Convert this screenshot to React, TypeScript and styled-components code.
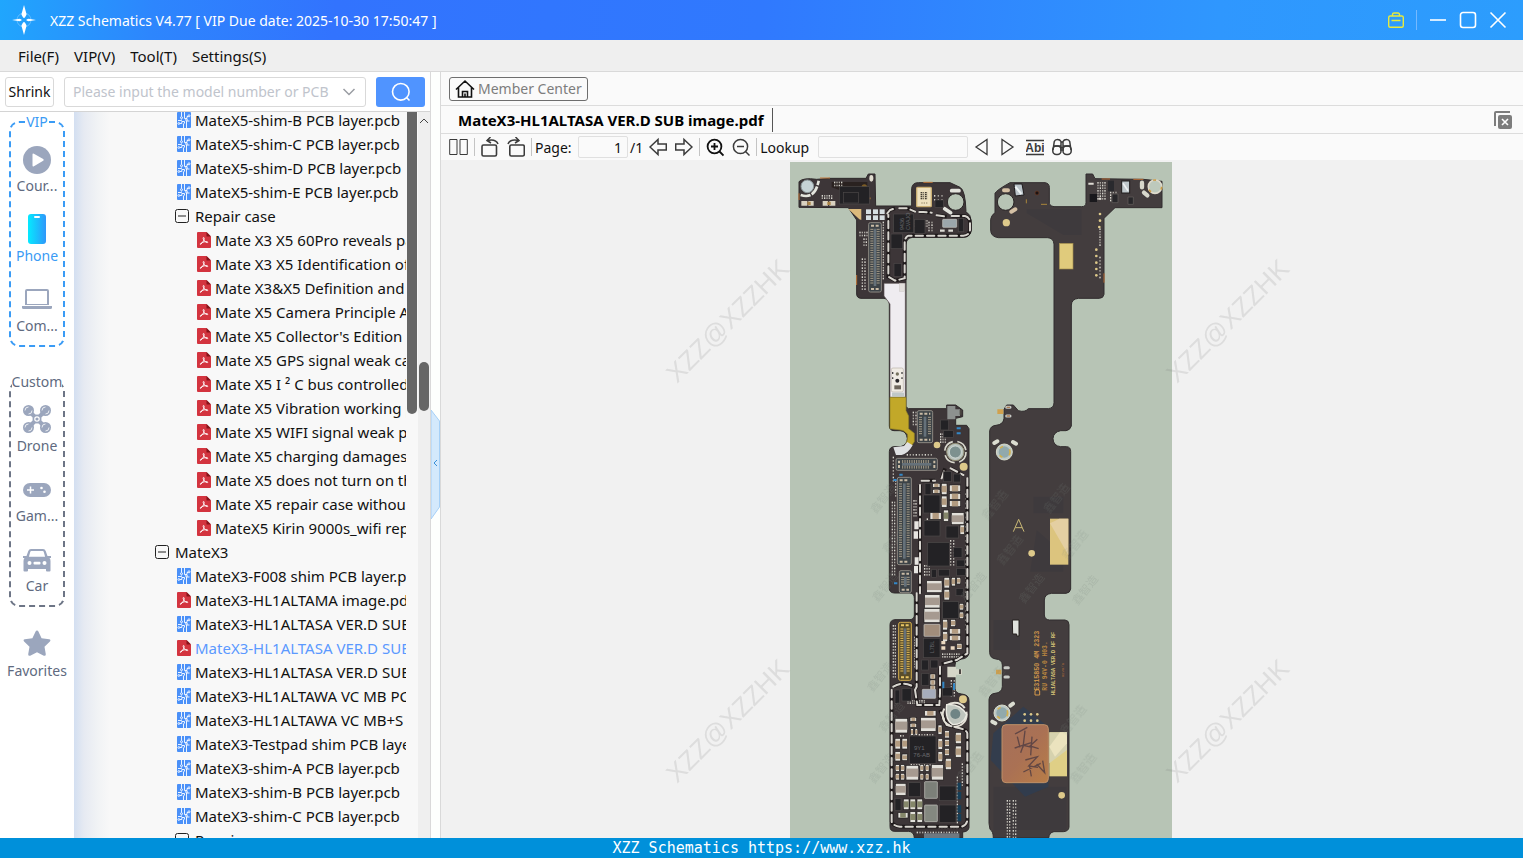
import React, { useState } from "react";
import styled, { createGlobalStyle } from "styled-components";

const font = `"Noto Sans", "Open Sans", "Noto Sans CJK SC", sans-serif`;

const GlobalStyle = createGlobalStyle`
  * { box-sizing: border-box; }
  body { margin: 0; font-family: ${font}; font-size: 14px; color: #111; }
  button, input { font: inherit; color: inherit; }
  button { border: 0; padding: 0; background: none; cursor: pointer; }
  svg { display: block; flex: none; }
`;

const Window = styled.div`
  display: flex;
  flex-direction: column;
  height: 100vh;
  min-height: 480px;
  overflow: hidden;
  background: #fff;
`;

/* ---------- title bar and menu ---------- */

const TitleBar = styled.header`
  display: flex;
  align-items: center;
  flex: none;
  height: 40px;
  padding: 0 16px 0 12px;
  color: #fff;
  background: linear-gradient(95deg, #20a6fd 0%, #2d86fd 10%, #3273fe 22%, #3079fe 50%, #2f97fe 80%, #2c9dfd 100%);
`;
const Title = styled.h1`
  flex: 1;
  margin: 0 0 0 14px;
  font-size: 14px;
  font-weight: 400;
`;
const WindowButtons = styled.div`
  display: flex;
  align-items: center;
  gap: 12px;
`;
const TitleDivider = styled.span`
  width: 1px;
  height: 20px;
  background: #75b9ff;
`;
const MenuBar = styled.nav`
  display: flex;
  align-items: center;
  flex: none;
  gap: 15px;
  height: 32px;
  padding: 1px 18px 0;
  font-size: 15px;
  background: #efefef;
  border-bottom: 1px solid #d9d9d9;
`;

const Main = styled.div`
  display: flex;
  flex: 1;
  min-height: 0;
`;

/* ---------- left side ---------- */

const LeftPane = styled.aside`
  display: flex;
  flex-direction: column;
  flex: none;
  width: 431px;
  border-right: 1px solid #d9d9d9;
`;
const SearchRow = styled.form`
  display: flex;
  align-items: center;
  flex: none;
  height: 40px;
  padding: 0 5px;
  border-bottom: 1px solid #d4d4d4;
`;
const ShrinkButton = styled.button`
  width: 49px;
  height: 30px;
  border: 1px solid #d9d9d9;
  border-radius: 3px;
`;
const Combo = styled.div`
  display: flex;
  align-items: center;
  flex: 1;
  height: 30px;
  margin: 0 10px;
  padding: 0 8px;
  gap: 6px;
  border: 1px solid #d9d9d9;
  border-radius: 3px;
`;
const ComboInput = styled.input`
  flex: 1;
  min-width: 0;
  border: 0;
  padding: 0;
  outline: 0;
  background: none;
  &::placeholder { color: #c0c4cc; opacity: 1; }
`;
const SearchButton = styled.button`
  display: grid;
  place-items: center;
  width: 49px;
  height: 30px;
  border-radius: 3px;
  background: #5094ff;
`;
const LeftBody = styled.div`
  display: flex;
  flex: 1;
  min-height: 0;
`;
const Categories = styled.nav`
  display: flex;
  flex-direction: column;
  align-items: center;
  flex: none;
  width: 74px;
`;
const CategoryGroup = styled.fieldset<{ $active?: boolean }>`
  width: 56px;
  min-width: 0;
  margin: 0;
  padding: 0 0 3px;
  border: 2px dashed ${(p) => (p.$active ? "#3a9bf5" : "#6d7586")};
  border-radius: 10px;
  & + & { margin: 25px 0 10px; }
`;
const GroupTitle = styled.legend<{ $active?: boolean }>`
  margin: 0 auto;
  padding: 0;
  line-height: 20px;
  color: ${(p) => (p.$active ? "#3a9bf5" : "#606a80")};
`;
const CategoryButton = styled.button<{ $active?: boolean }>`
  display: flex;
  flex-direction: column;
  align-items: center;
  justify-content: flex-end;
  width: 100%;
  height: 66px;
  margin-bottom: 4px;
  color: ${(p) => (p.$active ? "#3a9bf5" : "#606a80")};
`;
const CategoryLabel = styled.span`
  line-height: 24px;
`;
const TreeList = styled.ul`
  flex: 1;
  min-width: 0;
  margin: 0;
  padding: 0;
  overflow: hidden;
  list-style: none;
  font-size: 15px;
  background: linear-gradient(90deg, #d3dff1 0, #e6eaf2 10px, #f1f3f5 24px, #f8f8f8 36px);
`;
const TreeRow = styled.li`
  height: 24px;
  overflow: hidden;
  &:first-child { margin-top: -4px; }
`;
const TreeItem = styled.button<{ $depth: number; $active?: boolean }>`
  display: flex;
  align-items: center;
  height: 24px;
  padding-left: ${(p) => 81 + p.$depth * 20}px;
  white-space: nowrap;
  color: ${(p) => (p.$active ? "#5b99ff" : "#111")};
`;
const IconSlot = styled.span<{ $file?: boolean }>`
  flex: none;
  width: 20px;
  padding-left: ${(p) => (p.$file ? 2 : 0)}px;
`;
const InnerScroll = styled.div`
  flex: none;
  width: 12px;
  padding-left: 1px;
  background: #f8f8f8;
`;
const InnerThumb = styled.div`
  width: 10px;
  height: 302px;
  border-radius: 0 0 5px 5px;
  background: #666;
`;
const OuterScroll = styled.div`
  display: flex;
  flex-direction: column;
  align-items: center;
  flex: none;
  width: 12px;
  padding-top: 6px;
  background: #efefef;
`;
const OuterThumb = styled.div`
  width: 10px;
  height: 49px;
  margin-top: 238px;
  border-radius: 5px;
  background: #666;
`;
const Splitter = styled.div`
  display: flex;
  align-items: center;
  flex: none;
  width: 9px;
  padding-top: 20px;
  background: #fdfffd;
`;

/* ---------- right side ---------- */

const RightPane = styled.main`
  display: flex;
  flex-direction: column;
  flex: 1;
  min-width: 0;
  border-left: 1px solid #d9d9d9;
  background: #fafafa;
`;
const MemberRow = styled.div`
  display: flex;
  align-items: center;
  flex: none;
  height: 34px;
  padding: 0 8px;
  border-bottom: 1px solid #dcdcdc;
`;
const MemberButton = styled.button`
  display: flex;
  align-items: center;
  gap: 3px;
  height: 24px;
  padding: 0 5px;
  border: 1px solid #6e6e6e;
  border-radius: 3px;
  color: #7d7d7d;
`;
const TabRow = styled.div`
  display: flex;
  align-items: center;
  justify-content: space-between;
  flex: none;
  height: 28px;
  padding: 0 10px 0 17px;
  border-bottom: 1px solid #dcdcdc;
`;
const Tab = styled.button`
  height: 24px;
  padding-right: 8px;
  border-right: 1px solid #555;
  font-size: 15px;
  font-weight: 700;
  color: #000;
`;
const Toolbar = styled.div`
  display: flex;
  align-items: center;
  flex: none;
  gap: 6px;
  height: 26px;
  padding: 0 8px;
`;
const ToolGroup = styled.div`
  display: flex;
  align-items: center;
  gap: 8px;
`;
const ToolLabel = styled.label<{ $width: number }>`
  width: ${(p) => p.$width}px;
  margin-left: -3px;
  white-space: nowrap;
`;
const ToolSep = styled.span`
  width: 1px;
  height: 18px;
  background: #c4c4c4;
`;
const ToolInput = styled.input<{ $width: number }>`
  width: ${(p) => p.$width}px;
  height: 22px;
  padding: 0 5px;
  text-align: right;
  border: 1px solid #e0e0e0;
  border-radius: 2px;
  background: #fafafa;
`;
const PageField = styled.span`
  display: flex;
  align-items: center;
  gap: 2px;
`;
const Viewer = styled.section`
  position: relative;
  display: flex;
  justify-content: center;
  align-items: flex-start;
  flex: 1;
  min-height: 0;
  padding: 2px 2px 0 0;
  overflow: hidden;
  background: #f1f1f1;
`;
const Watermarks = styled.svg`
  position: absolute;
  inset: 0;
  width: 100%;
  height: 100%;
  pointer-events: none;
`;
const Footer = styled.footer`
  flex: none;
  height: 20px;
  line-height: 20px;
  text-align: center;
  font-family: "DejaVu Sans Mono", "Liberation Mono", monospace;
  font-size: 15px;
  color: #fff;
  background: #0090da;
`;

/* ---------- small icons ---------- */

const Logo = () => (
  <svg width="24" height="30" viewBox="0 0 24 30" fill="#fff">
    <circle cx="12" cy="15" r="7" fill="none" stroke="#8fd0ff" strokeWidth="0.8" opacity="0.7" />
    <path d="M12 0l2.600 9.500-1.800 3.200h-1.600L9.400 9.500zM12 30l2.600-9.500-1.800-3.200h-1.600l-1.800 3.200zM0 15l7.500-1.300 2 .9v.8l-2 .9zM24 15l-7.500-1.300-2 .9v.8l2 .9z" />
  </svg>
);
const Bag = () => (
  <svg width="16" height="18" viewBox="1 0 16 18" fill="none" stroke="#e8ea3c" strokeWidth="1.400">
    <rect x="1.700" y="5" width="14.600" height="11.300" rx="1.500" />
    <path d="M5.500 5V3.500a1.500 1.500 0 0 1 1.500-1.500h4a1.500 1.500 0 0 1 1.500 1.500V5M4.500 9.500h9" />
  </svg>
);
const WinIcon = ({ d }: { d: string }) => (
  <svg width="18" height="18" viewBox="0 0 18 18" fill="none" stroke="#fff" strokeWidth="1.600"><path d={d} /></svg>
);
const PcbFile = () => (
  <svg width="14" height="16" viewBox="0 0 14 16">
    <rect width="14" height="16" rx="1" fill="#4a90f8" />
    <g fill="none" stroke="#fff" strokeWidth="0.900">
      <path d="M4.500 0v4.500M7.500 0v6.500h2.500V4.500h1.200M1 8.500h3.500v-1M2.800 11.500h2v-2h2.700V11L6.500 12v4M9.500 16V9h3" />
      <circle cx="4.500" cy="5.700" r="1" /><circle cx="12" cy="3.800" r="1" /><circle cx="1.800" cy="11.500" r="0.900" /><circle cx="9.500" cy="7.900" r="0.900" />
    </g>
  </svg>
);
const PdfFile = () => (
  <svg width="14" height="16" viewBox="0 0 14 16">
    <path d="M1 0h8.500L14 4.500V15a1 1 0 0 1-1 1H1a1 1 0 0 1-1-1V1a1 1 0 0 1 1-1z" fill="#d3343f" />
    <path d="M9.500 0L14 4.500H9.500z" fill="#85141b" />
    <path d="M6.600 5.500c1.400 0 .5 3.800-2.800 6.800-.6.300-1-.3-.3-.8 2.200-1.500 5-2.300 7-1.700.7.400.2 1-.5.800-2-.5-3.700-3-3.900-4.400 0-.4.200-.7.500-.7z" fill="none" stroke="#fff" strokeWidth="0.900" />
  </svg>
);
const Minus = () => (
  <svg width="14" height="14" viewBox="0 0 14 14" fill="none" stroke="#222"><rect x="0.500" y="0.500" width="13" height="13" rx="2" /><path d="M3 7h8" /></svg>
);

const catColor = "#9ba6bd";
const CourseIcon = () => (
  <svg width="28" height="28" viewBox="0 0 28 28"><circle cx="14" cy="14" r="14" fill={catColor} /><path d="M9.500 8.500q0-1.500 1.400-.8l9.300 5.400q1.200.9 0 1.700l-9.300 5.400q-1.400.6-1.400-.8z" fill="#fff" /></svg>
);
const PhoneIcon = () => (
  <svg width="18" height="30" viewBox="0 0 18 30">
    <defs><linearGradient id="ph" x1="0" x2="1"><stop offset="0" stopColor="#05eaff" /><stop offset="1" stopColor="#2f97fa" /></linearGradient></defs>
    <rect width="18" height="30" rx="3" fill="url(#ph)" /><rect x="6" y="2" width="6" height="2" rx="1" fill="#fff" />
  </svg>
);
const LaptopIcon = () => (
  <svg width="30" height="28" viewBox="0 0 30 28" fill={catColor}><path d="M5 3h20a2 2 0 0 1 2 2v14H3V5a2 2 0 0 1 2-2zm0 2v13h20V5z" fillRule="evenodd" /><path d="M0 20h30v1.500q0 1.500-1.500 1.500h-27Q0 23 0 21.500z" /></svg>
);
const DroneIcon = () => (
  <svg width="28" height="30" viewBox="0 0 28 30">
    <path d="M6 7l16 16M22 7L6 23" stroke={catColor} strokeWidth="4" />
    {[[5.5, 6.5], [22.5, 6.5], [5.5, 23.500], [22.5, 23.500]].map(([x, y]) => (
      <g key={`${x}-${y}`}><circle cx={x} cy={y} r="5.500" fill={catColor} /><path d={`M${x - 3.500} ${y}a3.500 3.500 0 0 1 3.500-3.500M${x + 3.500} ${y}a3.500 3.500 0 0 1-3.500 3.500`} fill="none" stroke="#fff" strokeWidth="0.800" /></g>
    ))}
    <circle cx="14" cy="15" r="4.500" fill={catColor} /><circle cx="14" cy="15" r="2.200" fill="none" stroke="#fff" strokeWidth="1.200" />
  </svg>
);
const GameIcon = () => (
  <svg width="28" height="28" viewBox="0 0 28 28"><rect y="7" width="28" height="14" rx="7" fill={catColor} /><path d="M7.500 10.500v7M4 14h7" stroke="#fff" strokeWidth="1.500" /><circle cx="18.500" cy="12" r="1.300" fill="#fff" /><circle cx="21.500" cy="15.700" r="1.300" fill="#fff" /></svg>
);
const CarIcon = () => (
  <svg width="28" height="28" viewBox="0 0 28 28">
    <path d="M8 3h12q2 0 2.700 2l1.800 5H28v2h-1.500q1 1 1 3v9.500q0 1-1 1h-2.500q-1 0-1-1V23H5v1.500q0 1-1 1H1.500q-1 0-1-1V15q0-2 1-3H0v-2h3.500l1.800-5Q6 3 8 3z" fill={catColor} />
    <path d="M8.300 5h11.400q.8 0 1 .8l1.400 5H5.900l1.400-5q.3-.8 1-.8z" fill="#fff" />
    <circle cx="6.500" cy="17" r="2" fill="#fff" /><circle cx="21.500" cy="17" r="2" fill="#fff" /><rect x="10.500" y="15.700" width="7" height="2.800" rx="1" fill="#fff" />
  </svg>
);
const StarIcon = () => (
  <svg width="30" height="30" viewBox="0 0 30 30"><path d="M15 1.500q1 0 1.400 1l3.200 6.700 7.600 1q2 .6.700 2.300l-5.400 5.200 1.300 7.500q0 2.200-2 1.500L15 23.200l-6.800 3.500q-2 .7-2-1.500l1.300-7.500-5.400-5.200q-1.300-1.700.7-2.300l7.600-1 3.200-6.700q.4-1 1.400-1z" fill={catColor} /></svg>
);

const Tool = ({ label, width = 18, children }: { label: string; width?: number; children: React.ReactNode }) => (
  <button type="button" aria-label={label} title={label}>
    <svg width={width} height="20" viewBox={`0 0 ${width} 20`} fill="none" stroke="#3b3b3b" strokeWidth="1.300">{children}</svg>
  </button>
);

/* ---------- circuit board page: three drawing units to a pixel ---------- */

type Part = [number, number, number, number];

const whiteFence =
  "M322 160L330 150L345 145M358 145H382L405 155M418 156H430L455 158M470 166L500 170M515 168H555Q570 172 570 190V210Q568 226 550 227H385Q374 232 374 250V355L345 362L325 350V165" +
  "M485 955L495 925M425 962H465M512 925L550 945M420 975V1300M562 955V1480L530 1500L485 1512M410 1300V1580L405 1590M480 1520V1600L478 1635H412L405 1590M340 1580Q370 1562 400 1580" +
  "M335 1590V1985Q340 1998 360 2000H545Q560 1996 562 1980V1720Q560 1710 540 1705L500 1695L480 1650";

const darkChips: Part[] = [
  [341, 162, 60, 56], [403, 178, 32, 42], [333, 222, 35, 44], [342, 310, 22, 40], [178, 80, 90, 52], [190, 97, 45, 32], [465, 120, 25, 22], [535, 175, 16, 40],
  [482, 780, 24, 30], [490, 812, 30, 20], [490, 935, 24, 30], [520, 942, 22, 24], [435, 970, 18, 34], [430, 1005, 50, 54], [432, 1082, 48, 46], [498, 1098, 38, 36], [443, 1148, 65, 70],
  [520, 1162, 26, 30], [530, 1200, 24, 20], [530, 1225, 26, 22], [475, 1228, 34, 20], [455, 1228, 14, 24], [528, 1285, 22, 22], [488, 1325, 48, 50], [430, 1435, 50, 58], [425, 1500, 20, 30], [452, 1500, 22, 24], [425, 1540, 22, 36],
  [366, 1585, 28, 38], [345, 1590, 14, 40], [488, 1582, 30, 26], [388, 1728, 80, 82], [386, 1868, 35, 42], [478, 1878, 50, 44], [478, 1935, 50, 52], [345, 1915, 18, 36],
];
const caps: Part[] = [
  [458, 970, 22, 12], [458, 988, 22, 12], [484, 970, 17, 34], [508, 975, 34, 20], [508, 1000, 34, 18], [508, 1022, 34, 18], [484, 1008, 17, 34], [450, 1058, 34, 20], [514, 1058, 38, 36], [540, 1095, 13, 28],
  [440, 1262, 46, 36], [434, 1304, 46, 40], [434, 1345, 46, 36], [432, 1346, 48, 42], [492, 1252, 17, 32], [492, 1288, 17, 32], [514, 1252, 12, 26], [530, 1252, 12, 20], [538, 1330, 13, 20], [538, 1356, 13, 20],
  [488, 1378, 15, 32], [512, 1378, 15, 22], [508, 1406, 34, 16], [508, 1426, 34, 16], [488, 1415, 15, 30], [530, 1450, 16, 18], [450, 1542, 17, 15], [450, 1560, 17, 15], [450, 1576, 17, 12],
  [345, 1675, 38, 44], [422, 1672, 46, 42], [390, 1672, 20, 12], [390, 1690, 20, 12], [392, 1706, 8, 20], [405, 1706, 8, 20], [434, 1652, 34, 16], [345, 1735, 16, 32], [366, 1735, 16, 32], [345, 1775, 16, 28], [366, 1782, 16, 20],
  [474, 1695, 12, 28], [474, 1736, 14, 32], [474, 1775, 14, 30], [494, 1712, 14, 22], [494, 1738, 14, 22], [494, 1765, 14, 22], [526, 1717, 18, 34], [526, 1758, 18, 34], [496, 1795, 18, 34],
  [378, 1816, 38, 44], [454, 1814, 36, 46], [346, 1814, 12, 20], [362, 1814, 12, 20], [420, 1814, 11, 20], [436, 1814, 11, 20], [346, 1840, 12, 20], [362, 1840, 12, 20], [420, 1840, 11, 20], [436, 1840, 11, 20], [346, 1870, 32, 36],
];
const oliveCaps: Part[] = [
  [370, 1917, 17, 32], [390, 1917, 17, 32], [411, 1917, 17, 32], [390, 1955, 17, 32], [411, 1955, 17, 32], [354, 1958, 30, 16], [490, 1050, 16, 34],
];
const shields: [number, number, number, number, string][] = [
  [488, 178, 42, 24, "#9ba6ab"], [432, 1393, 48, 36, "#a18d7b"], [427, 1588, 40, 27, "#a6acbb"], [434, 1865, 38, 50, "#7c8079"], [434, 1935, 38, 50, "#848880"],
];
/* [x, y, columns, rows, x step, y step] of rows of solder pads */
const padGrids: [number, number, number, number, number, number][] = [
  [238, 215, 4, 2, 7, 9], [250, 235, 2, 3, 7, 9], [245, 295, 2, 11, 8, 9], [308, 185, 1, 22, 6, 8], [335, 1025, 2, 25, 7, 9], [400, 1020, 2, 6, 6, 9], [398, 755, 2, 5, 8, 9], [338, 890, 1, 8, 7, 10],
  [345, 960, 1, 6, 7, 9], [380, 882, 9, 1, 9, 8], [404, 180, 6, 3, 7, 8], [445, 185, 2, 4, 9, 8], [462, 105, 3, 2, 11, 12], [162, 65, 4, 2, 7, 9], [125, 105, 5, 2, 7, 7], [338, 1395, 2, 18, 6, 9],
  [402, 1430, 1, 12, 6, 8], [530, 1850, 1, 16, 6, 9], [545, 1810, 1, 8, 6, 9], [440, 1075, 1, 4, 7, 9], [486, 1480, 8, 2, 7, 8], [510, 1140, 2, 9, 9, 9], [432, 1215, 3, 4, 7, 9], [480, 820, 3, 4, 7, 8], [475, 2000, 8, 1, 9, 8],
  [392, 1722, 9, 1, 8, 6], [392, 1812, 9, 1, 8, 6], [416, 1135, 1, 14, 7, 9], [555, 1000, 1, 30, 7, 14], [410, 2015, 16, 1, 8, 8], [512, 1560, 2, 6, 9, 9], [382, 1620, 8, 2, 7, 7], [360, 1725, 2, 1, 8, 8],
  [952, 66, 4, 7, 7, 8], [990, 95, 3, 4, 8, 8], [680, 1920, 2, 13, 7, 9], [698, 1920, 2, 13, 7, 10], [958, 205, 1, 7, 8, 8], [958, 290, 1, 7, 8, 10],
];
const goldDots: [number, number, number][] = [
  [679, 188, 11], [960, 162, 4], [960, 182, 4], [958, 201, 4], [949, 269, 4], [949, 288, 4], [949, 308, 4], [949, 327, 4], [949, 346, 4], [471, 855, 10], [551, 920, 12], [755, 1180, 10], [549, 1618, 12], [845, 1906, 10],
  [734, 1663, 4], [753, 1663, 4], [772, 1663, 4], [734, 1682, 4], [753, 1682, 4], [772, 1682, 4],
];
const stamps = [
  [310, 1015], [645, 1035], [830, 1015], [345, 1135], [690, 1170], [885, 1155], [315, 1280], [580, 1280], [755, 1285], [915, 1290],
  [300, 1550], [635, 1565], [335, 1670], [880, 1680], [305, 1825], [570, 1820], [910, 1825],
];

const Connector = ({ x, y, w, h, gold }: { x: number; y: number; w: number; h: number; gold?: boolean }) => {
  const tall = h > w;
  const long = tall ? h : w;
  return (
    <g transform={tall ? `translate(${x} ${y})` : `translate(${x} ${y + h}) rotate(-90)`}>
      <g transform={tall ? undefined : `translate(${h} 0) rotate(0) translate(${-h} 0)`}>
        <rect width={tall ? w : h} height={long} rx="5" fill={gold ? "#594d2a" : "#3d4347"} stroke={gold ? "#d2ac4e" : "#8d8982"} strokeWidth="3" />
        <rect x={(tall ? w : h) / 2 - 4} y="18" width="8" height={long - 36} fill="#65717a" />
        {Array.from({ length: Math.floor((long - 36) / 7) }, (_, i) => (
          <path key={i} d={`M5 ${20 + i * 7}h9M${(tall ? w : h) - 14} ${20 + i * 7}h9`} stroke={gold ? "#e5be5c" : "#a59c88"} strokeWidth="3" />
        ))}
        <path d={`M7 9h${(tall ? w : h) - 14}M7 ${long - 9}h${(tall ? w : h) - 14}`} stroke={gold ? "#e9c665" : "#c9bba5"} strokeWidth="6" strokeDasharray="9 5" />
      </g>
    </g>
  );
};

const Screw = ({ x, y, r = 22 }: { x: number; y: number; r?: number }) => (
  <g>
    <circle cx={x} cy={y} r={r + 6} fill="none" stroke="#d9d8cd" strokeWidth="5" strokeDasharray="38 14" />
    <circle cx={x} cy={y} r={r} fill="#b9c3bd" stroke="#8e8a70" strokeWidth="3" />
    <circle cx={x} cy={y} r={r - 8} fill="#7d918f" stroke="#e3e9e6" strokeWidth="2" />
  </g>
);

const BoardPage = () => (
  <svg width="382" height="676" viewBox="30 6 1146 2028" role="img" aria-label="Front and back of the board">
    <defs>
      <pattern id="mesh" width="6" height="6" patternUnits="userSpaceOnUse"><path d="M0 6L6 0M0 0L6 6" stroke="#2c2f36" strokeWidth="1" /></pattern>
      <linearGradient id="copper" x2="1" y2="1"><stop stopColor="#a5705a" /><stop offset="0.500" stopColor="#aa7154" /><stop offset="1" stopColor="#b87d47" /></linearGradient>
    </defs>
    <rect x="30" y="6" width="1146" height="2028" fill="#b7c4b5" />

    {/* front side */}
    <path
      d="M57 142V65Q70 52 110 58L150 55H258L265 42H285L287 138H395V85Q397 68 415 68H510L540 82Q556 90 558 155Q573 165 573 180V212Q570 232 550 232H398Q378 234 378 255V740L385 746H500V735H527L548 750V770L527 775V796H560L567 806V1480Q563 1496 545 1497Q526 1498 525 1515V1585Q526 1601 545 1602Q567 1604 567 1622V2003Q565 2015 548 2016V2034H403Q402 2014 385 2014H345Q330 2014 330 2000V1395Q330 1380 345 1379H390Q403 1378 403 1365V1315Q403 1300 390 1299H343Q328 1298 328 1285V875Q328 861 342 860H362Q382 854 382 836Q380 813 360 812H342Q328 811 328 798V432Q326 417 312 415H243Q230 414 230 402V180L205 143Z"
      fill="#3d3638" stroke="#2e292b" strokeWidth="3"
    />
    <path d="M120 54h30M430 67h28M230 345v30M57 100v20" stroke="#c0763a" strokeWidth="3" />
    <circle cx="527" cy="126" r="25" fill="#b7c4b5" stroke="#292425" strokeWidth="3" />
    <path d="M515 92h22M494 146l18 12" stroke="#e2e3dc" strokeWidth="11" strokeLinecap="round" />
    <path d="M62 105Q105 120 116 62" fill="none" stroke="#e4e5dd" strokeWidth="8" strokeDasharray="30 4" />
    <circle cx="82" cy="79" r="19" fill="#c6d3d6" stroke="#8b9698" strokeWidth="3" />
    <path d="M64 130h18M85 130h16M128 130h16M148 130h18" stroke="#d9d2c0" strokeWidth="14" />
    <path d="M82 130h10M142 130h10" stroke="#aa8447" strokeWidth="10" />
    <path d="M155 66H262V130H178V90L155 82Z" fill="#2a2220" />
    <path d="M262 100v28M248 115h24" stroke="#9b6d34" strokeWidth="5" />
    <circle cx="253" cy="81" r="8" fill="#7d5d26" />
    <ellipse cx="274" cy="55" rx="6" ry="10" fill="#e0dcd0" />
    <rect x="410" y="82" width="44" height="58" rx="3" fill="#eee1bf" stroke="#c8ad72" strokeWidth="4" />
    <path d="M421 96h22v22h-22z" fill="#d8ccae" /><path d="M422 98h20M422 104h20M422 110h20M422 116h20" stroke="#413b31" strokeWidth="4" strokeDasharray="5 3 2 3" />
    <path d="M424 129h18" stroke="#8c7f63" strokeWidth="3" strokeDasharray="4 3" />
    <path d="M205 147H244V180L238 178Z" fill="#dcba7c" />
    {[258, 279, 299].map((x) => [148, 166].map((y) => <rect key={`${x}${y}`} x={x} y={y} width="15" height="14" fill="#d7dfe2" />))}
    {padGrids.map(([x, y, cols, rows, dx, dy]) =>
      Array.from({ length: cols * rows }, (_, i) => (
        <rect key={`${x}-${y}-${i}`} x={x + (i % cols) * dx} y={y + Math.floor(i / cols) * dy} width="4" height="5" fill={i % 3 ? "#a9a6a0" : "#d9d7cf"} />
      )),
    )}
    <path d={whiteFence} fill="none" stroke="#1f1a1b" strokeWidth="11" />
    <path d={whiteFence} fill="none" stroke="#d8d5cf" strokeWidth="6" strokeDasharray="22 12" strokeLinecap="round" />

    <Connector x={266} y={188} w={38} h={208} />
    <Connector x={352} y={952} w={42} h={262} />
    <Connector x={348} y={895} w={124} h={36} />
    <Connector x={412} y={752} w={46} h={96} />
    <Connector x={358} y={1232} w={36} h={66} />
    <Connector x={356} y={1387} w={38} h={174} gold />

    {/* flex cable */}
    <path d="M312 370H376V712H330V432L312 408Z" fill="#efecf0" stroke="#5a5052" strokeWidth="2" />
    <rect x="358" y="370" width="16" height="24" fill="#e2dfdc" stroke="#bdb7b5" />
    <rect x="334" y="624" width="36" height="72" rx="5" fill="#f0ece4" stroke="#b9b2a7" strokeWidth="2" />
    <circle cx="352" cy="662" r="6" fill="#29282a" /><circle cx="352" cy="642" r="5" fill="#77745f" />
    <path d="M338 636v6M366 636v6M338 652v5M366 652v5" stroke="#444" strokeWidth="4" />
    <rect x="343" y="676" width="20" height="12" fill="#6e675c" /><rect x="336" y="698" width="36" height="12" fill="#c0c8c8" />
    <path d="M330 712H378V752L386 768V806L403 820V845L388 866L376 856Q386 835 382 822Q370 808 355 809L330 806Z" fill="#c2a829" stroke="#8e8024" strokeWidth="2" />
    <path d="M340 862L372 858L382 846L398 856Q385 880 365 885H348Z" fill="#dfe0e2" />

    {darkChips.map(([x, y, w, h]) => <rect key={`${x}-${y}`} x={x} y={y} width={w} height={h} fill="#232225" stroke="#4d4948" strokeWidth="2" />)}
    {[...caps, ...oliveCaps].map(([x, y, w, h], i) => {
      const big = w > 30 && h > 30;
      const body = i >= caps.length ? "#85876a" : big ? "#a69a90" : "#b29b80";
      return (
        <g key={`${x}-${y}`}>
          <rect x={x} y={y} width={w} height={h} fill="#e2e0da" stroke="#211e1e" strokeWidth="2" />
          {w > h && !big ? <rect x={x + w * 0.22} y={y + 1} width={w * 0.56} height={h - 2} fill={body} /> : <rect x={x + 1} y={y + h * 0.22} width={w - 2} height={h * 0.56} fill={body} />}
        </g>
      );
    })}
    {shields.map(([x, y, w, h, c]) => <rect key={y} x={x} y={y} width={w} height={h} rx="2" fill={c} stroke="#c8c8c2" strokeWidth="2" />)}
    <path d="M480 212h14M505 212h14" stroke="#dcdad4" strokeWidth="7" />
    <path d="M403 1084h13v24h-13zM401 1114h13v22h-13zM404 1192h12v22h-12zM402 1218h12v22h-12z" fill="#e7e5e1" />
    <path d="M538 1868v22M538 1896v22M538 1936v22M538 1962v22" stroke="#163e57" strokeWidth="11" />
    <path d="M530 805h12M530 820h12M340 960h10M358 944h10M342 1270h10M490 1565v20M522 1570v20" stroke="#3388c7" strokeWidth="6" />
    <path d="M484 1464h12M512 1464h12M484 1448h12" stroke="#ead8c0" strokeWidth="10" />
    <path d="M502 738H526V748H540V768H526V778H502Z" fill="#8d918f" /><path d="M502 1520H528V1528H546V1544H528V1552H502Z" fill="#d6d6c8" />
    <path d="M542 750v14M540 1528v14" stroke="#4c4743" strokeWidth="6" />
    <Screw x={526} y={876} r={26} />
    <circle cx="524" cy="1664" r="36" fill="none" stroke="#e5e2d8" strokeWidth="6" strokeDasharray="60 12" />
    <path d="M500 1634Q540 1630 560 1664Q550 1694 518 1694Q494 1680 500 1634Z" fill="#bfc5be" stroke="#ecebe3" strokeWidth="4" />
    <circle cx="526" cy="1662" r="15" fill="#6f8485" />
    <rect x="432" y="2020" width="106" height="14" fill="#6f7880" />
    <g fill="#6a6a6e" fontFamily="Liberation Sans" fontSize="18"><text x="402" y="1770">9Y1</text><text x="400" y="1792">76-AB</text></g>
    <g fill="#65676c" fontFamily="Liberation Sans" fontSize="16"><text transform="translate(372 210) rotate(-90)">9436</text><text transform="translate(390 210) rotate(-90)">CVAJO</text><text transform="translate(462 1480) rotate(-90)">L7BL</text></g>

    {/* back side */}
    <path
      d="M632 178Q634 165 645 158V100Q650 90 690 68H795Q808 70 808 82V130Q810 140 822 140H905Q918 140 918 128V42H938L945 56L1090 58L1146 64V143H1005L972 175V403Q970 415 958 415H895Q875 417 874 435V798Q870 811 858 812H842Q820 816 819 836Q820 858 842 860H860Q872 861 872 874V1287Q870 1299 858 1300H815Q794 1302 793 1320V1365Q794 1379 808 1380H855Q867 1381 867 1394V2001Q866 2014 850 2015H822Q808 2017 806 2034H640Q640 2014 630 2008L627 1990V1618Q630 1601 645 1600Q666 1598 667 1580V1515Q666 1498 648 1497Q630 1495 629 1478V812Q632 797 648 796Q670 794 672 775V748L680 735H700L715 752Q735 758 745 746H805Q822 744 822 728V252Q820 233 802 233H655Q632 230 632 210Z"
      fill="#433d3e" stroke="#312c2e" strokeWidth="3"
    />
    <path d="M740 148H905V225H850L740 160ZM760 1010H850V1060H760ZM770 1110L850 1180V1235H750ZM640 1880H860V2010H640ZM640 1380H720V1470H640Z" fill="url(#mesh)" opacity="0.600" />
    <path d="M730 1640L805 1700V1880L735 1910L632 1800L640 1720Z" fill="#2a3d58" opacity="0.600" />
    <circle cx="677" cy="126" r="25" fill="#b7c4b5" stroke="#292425" strokeWidth="3" />
    <path d="M672 91h12M694 155l12-7" stroke="#d5c1a5" strokeWidth="12" strokeLinecap="round" />
    <path d="M702 72H726L732 105L706 108Z" fill="#bac3c9" stroke="#1e1b1d" strokeWidth="3" /><path d="M706 80l18 22" stroke="#edf2f3" strokeWidth="6" />
    <circle cx="771" cy="99" r="6" fill="#1d1312" stroke="#6e3b24" strokeWidth="2" /><path d="M783 133h18M739 118v12" stroke="#a9863b" strokeWidth="3" />
    {padGrids.slice(-6).map(([x, y, cols, rows, dx, dy]) =>
      Array.from({ length: cols * rows }, (_, i) => (
        <rect key={`${x}-${y}-${i}`} x={x + (i % cols) * dx} y={y + Math.floor(i / cols) * dy} width="4" height="5" fill={i % 3 ? "#a9a6a0" : "#d9d7cf"} />
      )),
    )}
    <rect x="929" y="102" width="22" height="24" fill="#19181c" /><rect x="984" y="62" width="18" height="32" fill="#2a2a2e" />
    <rect x="1025" y="63" width="24" height="36" fill="#bfc8cb" stroke="#1f1c1c" strokeWidth="3" /><path d="M1029 70l15 22" stroke="#eef1f1" strokeWidth="5" />
    <path d="M1044 111h16v22h-16zM996 102h18v26h-18z" stroke="#66625f" strokeWidth="2" fill="#28272a" />
    <path d="M925 71h16M956 116h8" stroke="#dedbd4" strokeWidth="6" />
    <circle cx="1125" cy="80" r="20" fill="#bdc9bc" stroke="#dedacb" strokeWidth="5" /><circle cx="1125" cy="80" r="20" fill="none" stroke="#c99b45" strokeWidth="5" strokeDasharray="9 35" />
    <path d="M1086 68v14M1092 98l10 8" stroke="#d7d8cc" strokeWidth="13" strokeLinecap="round" />
    <path d="M965 57h25M1060 58h30M972 340v28" stroke="#b86d36" strokeWidth="3" />
    {goldDots.map(([x, y, r]) => <circle key={`${x}-${y}`} cx={x} cy={y} r={r} fill="#ddc98a" />)}
    <rect x="838" y="250" width="41" height="77" fill="#e0cb7c" stroke="#a18c4d" strokeWidth="2" />
    <rect x="810" y="1076" width="55" height="138" fill="#dcc47e" /><path d="M810 1090L838 1076H865V1185Z" fill="#e4cfa2" />
    <rect x="808" y="1717" width="53" height="132" fill="#dfcf86" /><path d="M808 1717H861V1770L808 1810Z" fill="#d6d2ae" /><path d="M808 1760L840 1717H861V1750L825 1790Z" fill="#ebe3be" />
    <rect x="666" y="1694" width="139" height="174" rx="12" fill="url(#copper)" stroke="#bd9068" strokeWidth="3" />
    <path d="M705 1722L742 1702M712 1730l8 32M735 1712l-6 50M704 1764l50-16M722 1778l8-22 26 6M756 1730l-4 56M772 1738l-22 20 26 8M736 1800l36-10-26 28 28 4M730 1836l52-26M748 1815l6 34M770 1812l24 26-6-36" fill="none" stroke="#4a3840" strokeWidth="4" opacity="0.750" />
    <path d="M697 1380h20v48h-7v-6h-12z" fill="#dfe2dd" stroke="#25201f" strokeWidth="3" />
    <path d="M652 748h18v14h-18zM648 1529h16v14h-16z" fill="#d1a14e" /><path d="M680 742h10M680 768h10M675 1523h10M675 1551h10" stroke="#c8cac5" strokeWidth="9" strokeLinecap="round" /><path d="M680 742h10M680 768h10" stroke="#aa7c52" strokeWidth="4" />
    <path d="M643 849l9-5M699 846l9 5M691 1637l8-6M637 1685l9 5" stroke="#dbddd1" strokeWidth="12" strokeLinecap="round" />
    {[[673, 876], [666, 1659]].map(([x, y]) => (
      <g key={y}><circle cx={x} cy={y} r="24" fill="#bdc9c6" stroke="#d8dbc9" strokeWidth="3" /><circle cx={x} cy={y} r="17" fill="#91a9ac" stroke="#d3b04d" strokeWidth="5" strokeDasharray="10 22" /></g>
    ))}
    <path d="M700 1115L716 1078L732 1115M706 1103H726" fill="none" stroke="#c9b876" strokeWidth="3" />
    <g fontFamily="Liberation Mono" fontWeight="700">
      <text transform="translate(776 1592) rotate(-90)" fontSize="20" fill="#c9924b">E315850 4M 2323</text>
      <text transform="translate(801 1592) rotate(-90)" fontSize="19" fill="#b98640">RU 94V-0 H03.</text>
      <text transform="translate(826 1605) rotate(-90)" fontSize="15" fill="#d9c779">HL1ALTASA VER.D HF RF</text>
      <text transform="translate(851 1552) rotate(-90)" fontSize="12" fill="#8e5c3b">02V0/8</text>
    </g>
    <path d="M765 1605h14v-12l-6-6-8 6z" fill="none" stroke="#d69a4b" strokeWidth="3" />

    <g fill="#7f8b82" opacity="0.200" fontFamily="Noto Sans CJK SC" fontSize="34" textAnchor="middle">
      {stamps.map(([x, y]) => <text key={`${x}-${y}`} transform={`translate(${x} ${y}) rotate(-52)`} y="12">鑫智造</text>)}
    </g>
  </svg>
);

/* ---------- data ---------- */

type Kind = "pcb" | "pdf" | "folder";
const tree: [Kind, number, string][] = [
  ["pcb", 1, "MateX5-shim-B PCB layer.pcb"],
  ["pcb", 1, "MateX5-shim-C PCB layer.pcb"],
  ["pcb", 1, "MateX5-shim-D PCB layer.pcb"],
  ["pcb", 1, "MateX5-shim-E PCB layer.pcb"],
  ["folder", 1, "Repair case"],
  ["pdf", 2, "Mate X3 X5 60Pro reveals pa"],
  ["pdf", 2, "Mate X3 X5 Identification of"],
  ["pdf", 2, "Mate X3&X5 Definition and"],
  ["pdf", 2, "Mate X5 Camera Principle An"],
  ["pdf", 2, "Mate X5 Collector's Edition E"],
  ["pdf", 2, "Mate X5 GPS signal weak cas"],
  ["pdf", 2, "Mate X5 I ² C bus controlled"],
  ["pdf", 2, "Mate X5 Vibration working p"],
  ["pdf", 2, "Mate X5 WIFI signal weak pra"],
  ["pdf", 2, "Mate X5 charging damages C"],
  ["pdf", 2, "Mate X5 does not turn on th"],
  ["pdf", 2, "Mate X5 repair case without"],
  ["pdf", 2, "MateX5 Kirin 9000s_wifi repa"],
  ["folder", 0, "MateX3"],
  ["pcb", 1, "MateX3-F008 shim PCB layer.pc"],
  ["pdf", 1, "MateX3-HL1ALTAMA image.pdf"],
  ["pcb", 1, "MateX3-HL1ALTASA VER.D SUB"],
  ["pdf", 1, "MateX3-HL1ALTASA VER.D SUB"],
  ["pcb", 1, "MateX3-HL1ALTASA VER.D SUB"],
  ["pcb", 1, "MateX3-HL1ALTAWA VC MB PC"],
  ["pcb", 1, "MateX3-HL1ALTAWA VC MB+S"],
  ["pcb", 1, "MateX3-Testpad shim PCB layer"],
  ["pcb", 1, "MateX3-shim-A PCB layer.pcb"],
  ["pcb", 1, "MateX3-shim-B PCB layer.pcb"],
  ["pcb", 1, "MateX3-shim-C PCB layer.pcb"],
  ["folder", 1, "Repair case"],
];
const fileIcons = { pcb: <PcbFile />, pdf: <PdfFile />, folder: <Minus /> };

const marks = [[236, 224], [736, 224], [236, 624], [736, 624]];

export default function App() {
  const [selected, setSelected] = useState(22);
  return (
    <Window>
      <GlobalStyle />
      <TitleBar>
        <Logo />
        <Title>XZZ Schematics V4.77 [ VIP Due date: 2025-10-30 17:50:47 ]</Title>
        <WindowButtons>
          <button aria-label="Toolbox"><Bag /></button>
          <TitleDivider />
          <button aria-label="Minimize"><WinIcon d="M1 9h16" /></button>
          <button aria-label="Maximize"><WinIcon d="M4 1.500h10a2.500 2.500 0 0 1 2.500 2.500v10a2.500 2.500 0 0 1-2.500 2.500H4A2.500 2.500 0 0 1 1.500 14V4A2.500 2.500 0 0 1 4 1.500z" /></button>
          <button aria-label="Close"><WinIcon d="M1.500 1.500l15 15M16.500 1.500l-15 15" /></button>
        </WindowButtons>
      </TitleBar>
      <MenuBar>
        <button>File(F)</button>
        <button>VIP(V)</button>
        <button>Tool(T)</button>
        <button>Settings(S)</button>
      </MenuBar>
      <Main>
        <LeftPane>
          <SearchRow onSubmit={(e) => e.preventDefault()}>
            <ShrinkButton type="button">Shrink</ShrinkButton>
            <Combo>
              <ComboInput aria-label="Model number" placeholder="Please input the model number or PCB" />
              <button type="button" aria-label="Show history">
                <svg width="16" height="16" viewBox="0 0 16 16" fill="none" stroke="#9a9da3" strokeWidth="1.500"><path d="M2.500 5L8 10.500 13.500 5" /></svg>
              </button>
            </Combo>
            <SearchButton aria-label="Search">
              <svg width="20" height="20" viewBox="0 0 20 20" fill="none" stroke="#fff" strokeWidth="1.600"><circle cx="9.800" cy="9.800" r="8.300" /><path d="M15.500 15.500l3 3" /></svg>
            </SearchButton>
          </SearchRow>
          <LeftBody>
            <Categories>
              <CategoryGroup $active>
                <GroupTitle $active>VIP</GroupTitle>
                <CategoryButton><CourseIcon /><CategoryLabel>Cour...</CategoryLabel></CategoryButton>
                <CategoryButton $active><PhoneIcon /><CategoryLabel>Phone</CategoryLabel></CategoryButton>
                <CategoryButton><LaptopIcon /><CategoryLabel>Com...</CategoryLabel></CategoryButton>
              </CategoryGroup>
              <CategoryGroup>
                <GroupTitle>Custom</GroupTitle>
                <CategoryButton><DroneIcon /><CategoryLabel>Drone</CategoryLabel></CategoryButton>
                <CategoryButton><GameIcon /><CategoryLabel>Gam...</CategoryLabel></CategoryButton>
                <CategoryButton><CarIcon /><CategoryLabel>Car</CategoryLabel></CategoryButton>
              </CategoryGroup>
              <CategoryButton><StarIcon /><CategoryLabel>Favorites</CategoryLabel></CategoryButton>
            </Categories>
            <TreeList>
              {tree.map(([kind, depth, name], i) => (
                <TreeRow key={i}>
                  <TreeItem $depth={depth} $active={i === selected} onClick={() => setSelected(i)}>
                    <IconSlot $file={kind !== "folder"}>{fileIcons[kind]}</IconSlot>
                    {name}
                  </TreeItem>
                </TreeRow>
              ))}
            </TreeList>
            <InnerScroll><InnerThumb /></InnerScroll>
            <OuterScroll>
              <svg width="10" height="6" viewBox="0 0 10 6" fill="none" stroke="#444"><path d="M1 5l4-4 4 4" /></svg>
              <OuterThumb />
            </OuterScroll>
          </LeftBody>
        </LeftPane>
        <Splitter>
          <button aria-label="Hide the list">
            <svg width="9" height="112" viewBox="0 0 9 112"><path d="M0 1l8.500 11v86L0 110z" fill="#d4e9fc" stroke="#a6d0f7" /><path d="M6 51L3 54l3 3" fill="none" stroke="#3a8fd8" /></svg>
          </button>
        </Splitter>
        <RightPane>
          <MemberRow>
            <MemberButton>
              <svg width="20" height="20" viewBox="0 0 20 20" fill="none" stroke="#111" strokeWidth="1.600"><path d="M1 10.500L10 2l9 8.500M3.500 8.500V18h13V8.500M7.500 18v-5.500h5V18M10 14.500V18" /></svg>
              Member Center
            </MemberButton>
          </MemberRow>
          <TabRow>
            <Tab>MateX3-HL1ALTASA VER.D SUB image.pdf</Tab>
            <button aria-label="Close all tabs">
              <svg width="20" height="20" viewBox="0 0 20 20"><path d="M2 16V3q0-1 1-1h14" fill="none" stroke="#7d7d7d" strokeWidth="2" /><rect x="5" y="5" width="14" height="14" rx="2" fill="#7d7d7d" /><path d="M9 9l6 6M15 9l-6 6" stroke="#fff" strokeWidth="1.600" /></svg>
            </button>
          </TabRow>
          <Toolbar>
            <Tool label="Two pages" width={19}><path d="M.7 2.500h7.300v15H.7zM11 2.500h7.300v15H11z" strokeWidth="1" /></Tool>
            <ToolSep />
            <ToolGroup>
              <Tool label="Rotate left"><rect x="1" y="8" width="14.500" height="11" rx="1.500" strokeWidth="1.600" /><path d="M6 3.500Q15 1.500 17 7M9.500 0L6 3.500l4 2.500" strokeWidth="1.500" /></Tool>
              <Tool label="Rotate right"><rect x="2.800" y="8" width="14.500" height="11" rx="1.500" strokeWidth="1.600" /><path d="M12 3.500Q3 1.500 1 7M8.500 0l3.500 3.500-4 2.500" strokeWidth="1.500" /></Tool>
            </ToolGroup>
            <ToolSep />
            <ToolLabel $width={37} htmlFor="page">Page:</ToolLabel>
            <PageField><ToolInput $width={50} id="page" defaultValue="1" />/1</PageField>
            <ToolGroup>
              <Tool label="Previous page"><path d="M1 10l8-7.500V7h8.300v6H9v4.500z" strokeWidth="1.500" /></Tool>
              <Tool label="Next page"><path d="M17 10L9 2.500V7H.7v6H9v4.500z" strokeWidth="1.500" /></Tool>
            </ToolGroup>
            <ToolSep />
            <ToolGroup>
              <Tool label="Zoom in"><g stroke="#111" strokeWidth="1.800"><circle cx="8.500" cy="9.500" r="6.900" /><path d="M5 9.500h7M8.500 6v7M13.500 14.500l4 4" /></g></Tool>
              <Tool label="Zoom out"><circle cx="8.500" cy="9.500" r="7.100" strokeWidth="1.500" /><path d="M5 9.500h7M13.500 14.500l4 4" strokeWidth="1.500" /></Tool>
            </ToolGroup>
            <ToolSep />
            <ToolLabel $width={52} htmlFor="lookup">Lookup</ToolLabel>
            <ToolInput $width={150} id="lookup" />
            <ToolGroup>
              <Tool label="Find previous"><path d="M13 2.500v15L2 10z" /></Tool>
              <Tool label="Find next"><path d="M2 2.500v15L13 10z" /></Tool>
              <Tool label="Match text"><path d="M0 3.500h18M0 17.500h18" /><text x="9" y="15" fontSize="12" fontWeight="700" fontFamily="Liberation Sans" textAnchor="middle" fill="#3b3b3b" stroke="none">Abi</text></Tool>
              <Tool label="Search document" width={20}>
                <path d="M1 13L2.300 4.500Q3 2.500 5.500 2.500T9 4.500V14M19 13l-1.300-8.500Q17 2.500 14.500 2.500T11 4.500V14M9 5h2M9 10.500h2M1.800 9h7M11 9h7.300" strokeWidth="1.500" />
                <rect x="0.800" y="9" width="8.200" height="8.500" rx="3.500" strokeWidth="1.500" /><rect x="11" y="9" width="8.200" height="8.500" rx="3.500" strokeWidth="1.500" />
              </Tool>
            </ToolGroup>
          </Toolbar>
          <Viewer>
            <BoardPage />
            <Watermarks aria-hidden="true">
              {marks.map(([x, y]) => (
                <text key={`${x}-${y}`} transform={`translate(${x} ${y}) rotate(-45)`} fontFamily="Liberation Sans" fontSize="26" fill="#777" opacity="0.160">XZZ@XZZHK</text>
              ))}
            </Watermarks>
          </Viewer>
        </RightPane>
      </Main>
      <Footer>XZZ Schematics https://www.xzz.hk</Footer>
    </Window>
  );
}
